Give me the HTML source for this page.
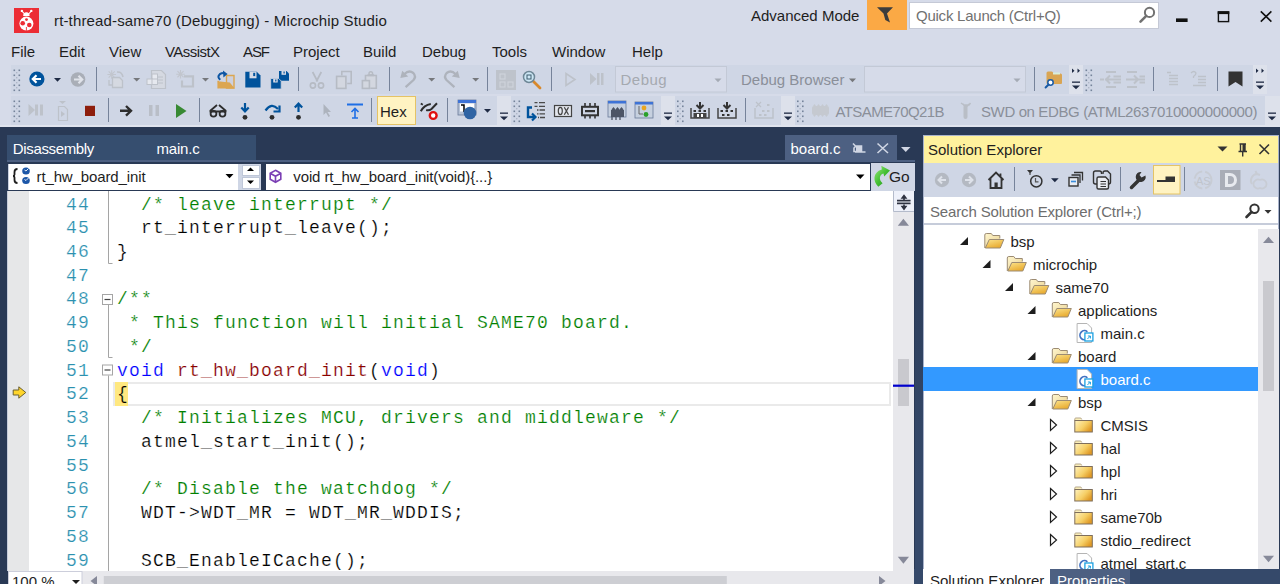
<!DOCTYPE html>
<html><head><meta charset="utf-8">
<style>
*{box-sizing:border-box}
html,body{margin:0;padding:0}
body{width:1280px;height:584px;overflow:hidden;position:relative;background:#D6DBE9;font-family:"Liberation Sans",sans-serif;font-size:15px;color:#1E1E1E}
.a{position:absolute}
.t{position:absolute;white-space:pre;line-height:1}
svg{position:absolute;left:0;top:0;overflow:visible}
.tb{position:absolute;background:#CFD6E5}
.ov{position:absolute;background:#DDE1EB}
.code{position:absolute;font-family:"Liberation Mono",monospace;font-size:18px;letter-spacing:1.2px;white-space:pre;line-height:23.73px;color:#000}
.ln{position:absolute;font-family:"Liberation Mono",monospace;font-size:18px;letter-spacing:1.2px;white-space:pre;line-height:23.73px;color:#2B91AF;text-align:right}
.code,.ln{-webkit-text-stroke:0.2px #fff}.cm{color:#008000}.kw{color:#0000FF}.fn{color:#880000}
</style></head><body>
<!-- ============ TITLE BAR ============ -->
<div class="a" style="left:14px;top:8px;width:25px;height:25px;background:#EC2D35"></div>
<svg width="1280" height="40">
 <path d="M22.2 11.3 L24.6 14 M31 11.3 L28.6 14" stroke="#fff" stroke-width="1.1" stroke-linecap="round"/>
 <circle cx="21.9" cy="10.9" r="1.2" fill="#fff"/><circle cx="31.3" cy="10.9" r="1.2" fill="#fff"/>
 <path fill="#fff" d="M23.2 16 Q23.2 12.3 26.4 12.3 Q29.6 12.3 29.6 16 Z"/>
 <circle cx="26.4" cy="23.6" r="7" fill="#fff"/>
 <circle cx="26.5" cy="19.6" r="1.4" fill="#EC2D35"/>
 <circle cx="22.7" cy="23.3" r="2.3" fill="#EC2D35"/>
 <circle cx="29.3" cy="25" r="2.3" fill="#EC2D35"/>
 <path d="M26.4 27 V30.8" stroke="#EC2D35" stroke-width="0.9"/>
 <!-- funnel -->
 <path fill="#3C3C3C" d="M877 7.3 H893 L887 13.5 L890 22.5 L885.3 20 L883.5 13.5 Z"/>
 <!-- search magnifier -->
 <circle cx="1149.5" cy="12.4" r="4.6" fill="none" stroke="#717171" stroke-width="2"/>
 <path d="M1146.3 15.8 L1140.5 21.6" stroke="#717171" stroke-width="2.6" stroke-linecap="round"/>
 <!-- window buttons -->
 <rect x="1176" y="18.4" width="11.6" height="3.6" fill="#111"/>
 <rect x="1218.4" y="12" width="10.2" height="9.6" fill="none" stroke="#111" stroke-width="1.4"/>
 <rect x="1217.7" y="11.3" width="11.6" height="2.8" fill="#111"/>
 <path d="M1260.8 11.4 L1271.4 21.6 M1271.4 11.4 L1260.8 21.6" stroke="#111" stroke-width="1.6"/>
</svg>
<div class="t" style="left:54px;top:13px;font-size:15px;color:#1E1E1E;letter-spacing:0.15px">rt-thread-same70 (Debugging) - Microchip Studio</div>
<div class="t" style="left:751px;top:8px;font-size:15px;color:#1E1E1E">Advanced Mode</div>
<div class="a" style="left:867px;top:0;width:40px;height:30px;background:#FBA945"></div>
<svg width="1280" height="40">
 <path fill="#3C3C3C" d="M877 7.3 H893 L887 13.5 L890 22.5 L885.3 20 L883.5 13.5 Z"/>
</svg>
<div class="a" style="left:909px;top:1.5px;width:250px;height:27.5px;background:#fff;border:1px solid #C5C9D6"></div>
<div class="t" style="left:916px;top:8px;color:#717171;letter-spacing:-0.24px">Quick Launch (Ctrl+Q)</div>
<svg width="1280" height="40">
 <circle cx="1149.5" cy="12.4" r="4.6" fill="none" stroke="#717171" stroke-width="2"/>
 <path d="M1146.3 15.8 L1140.5 21.6" stroke="#717171" stroke-width="2.6" stroke-linecap="round"/>
</svg>

<!-- ============ MENU ============ -->
<div class="t" style="left:11px;top:43.6px">File</div>
<div class="t" style="left:59px;top:43.6px">Edit</div>
<div class="t" style="left:109px;top:43.6px">View</div>
<div class="t" style="left:165px;top:43.6px;letter-spacing:-0.55px">VAssistX</div>
<div class="t" style="left:243px;top:43.6px;letter-spacing:-1.1px">ASF</div>
<div class="t" style="left:293px;top:43.6px">Project</div>
<div class="t" style="left:363px;top:43.6px">Build</div>
<div class="t" style="left:422px;top:43.6px">Debug</div>
<div class="t" style="left:492px;top:43.6px">Tools</div>
<div class="t" style="left:552px;top:43.6px">Window</div>
<div class="t" style="left:632px;top:43.6px">Help</div>
<!-- ============ TOOLBARS ============ -->
<div class="tb" style="left:11px;top:65px;width:1058px;height:29px"></div>
<div class="ov" style="left:1069px;top:65px;width:14px;height:29px"></div>
<div class="tb" style="left:1083px;top:65px;width:170px;height:29px"></div>
<div class="ov" style="left:1253px;top:65px;width:14px;height:29px"></div>
<div class="tb" style="left:11px;top:96px;width:486px;height:29px"></div>
<div class="ov" style="left:497px;top:96px;width:14px;height:29px"></div>
<div class="tb" style="left:511px;top:96px;width:150px;height:29px"></div>
<div class="ov" style="left:661px;top:96px;width:14px;height:29px"></div>
<div class="tb" style="left:675px;top:96px;width:106px;height:29px"></div>
<div class="ov" style="left:781px;top:96px;width:14px;height:29px"></div>
<div class="tb" style="left:795px;top:96px;width:470px;height:29px"></div>
<div class="ov" style="left:1265px;top:96px;width:15px;height:29px"></div>
<div class="a" style="left:0;top:125px;width:1280px;height:2px;background:#E0E4EE"></div>
<svg width="1280" height="130"><rect x="13.5" y="69.5" width="1.6" height="1.6" fill="#75839A"/><rect x="18.5" y="69.5" width="1.6" height="1.6" fill="#75839A"/><rect x="13.5" y="74.5" width="1.6" height="1.6" fill="#75839A"/><rect x="18.5" y="74.5" width="1.6" height="1.6" fill="#75839A"/><rect x="13.5" y="79.5" width="1.6" height="1.6" fill="#75839A"/><rect x="18.5" y="79.5" width="1.6" height="1.6" fill="#75839A"/><rect x="13.5" y="84.5" width="1.6" height="1.6" fill="#75839A"/><rect x="18.5" y="84.5" width="1.6" height="1.6" fill="#75839A"/><rect x="13.5" y="89.5" width="1.6" height="1.6" fill="#75839A"/><rect x="18.5" y="89.5" width="1.6" height="1.6" fill="#75839A"/><rect x="16.0" y="72.0" width="1.4" height="1.4" fill="#AEB7C7"/><rect x="16.0" y="77.0" width="1.4" height="1.4" fill="#AEB7C7"/><rect x="16.0" y="82.0" width="1.4" height="1.4" fill="#AEB7C7"/><rect x="16.0" y="87.0" width="1.4" height="1.4" fill="#AEB7C7"/><circle cx="36.9" cy="79" r="7.6" fill="#00539C"/><path d="M33 79 h8 M36.5 75.3 L32.8 79 L36.5 82.7" stroke="#fff" stroke-width="2.2" fill="none"/><path d="M54 78 h7 l-3.5 3.8500000000000005 z" fill="#1E2A44"/><circle cx="78" cy="79.5" r="7.3" fill="#A9AEB7"/><path d="M82 79.5 h-8 M78.5 75.8 L82.2 79.5 L78.5 83.2" stroke="#E0E3EA" stroke-width="2.2" fill="none"/><rect x="96" y="67" width="1" height="24" fill="#76839A"/><path d="M107.40 74.50 L116.00 74.50 M108.66 71.46 L114.74 77.54 M111.70 70.20 L111.70 78.80 M114.74 71.46 L108.66 77.54 " stroke="#C2C6CE" stroke-width="1.1"/><path d="M112.5 77.5 h7 l3 3 v7 h-10 z" fill="#D5D9E1" stroke="#BDC2CA" stroke-width="1.3"/><path d="M117 72 q5 -0.5 6 5" stroke="#BDC2CA" stroke-width="1.6" fill="none"/><path d="M109 80 v5 h3" stroke="#BDC2CA" stroke-width="1.3" fill="none"/><path d="M133.2 78 h7 l-3.5 3.6 z" fill="#76787C"/><path d="M151.5 70.5 h10 l4 4 v14 h-14 z" fill="#D5D9E1" stroke="#BDC2CA" stroke-width="1.2"/><path d="M156 77 h7 M156 80 h7 M156 83 h7" stroke="#BDC2CA" stroke-width="1"/><rect x="152" y="74" width="5.5" height="5.5" fill="#E6E9EF" stroke="#BDC2CA" stroke-width="1"/><rect x="147" y="79" width="5.5" height="5.5" fill="#E6E9EF" stroke="#BDC2CA" stroke-width="1"/><rect x="152" y="79" width="5.5" height="5.5" fill="#E6E9EF" stroke="#BDC2CA" stroke-width="1"/><path d="M176.20 74.20 L184.80 74.20 M177.46 71.16 L183.54 77.24 M180.50 69.90 L180.50 78.50 M183.54 71.16 L177.46 77.24 " stroke="#C2C6CE" stroke-width="1.1"/><path d="M184 76.3 h9 v10.2 h-11 v-6" stroke="#BDC2CA" stroke-width="2.2" fill="none"/><path d="M202 78 h7 l-3.5 3.6 z" fill="#76787C"/><path d="M226.5 75.5 h7.5 v12.5 h-7.5 z" fill="#CDD0DE" stroke="#DCA650" stroke-width="1.4"/><path d="M217.8 81.2 L229.8 82.6 L234.6 88.6 L219.2 88.6 Z" fill="#DCA650"/><path d="M218.2 80.8 v7.8" stroke="#DCA650" stroke-width="1.6"/><path d="M220.3 79.8 q-3.5-2.8 -0.5-5.6 q1.8-1.4 5-1.2" stroke="#0E56A3" stroke-width="2.1" fill="none"/><path d="M223 70.6 L227.6 73.9 L223.4 77.6 Z" fill="#0E56A3"/><path d="M245.3 71.8 h11.5 l3.7 3.7 v11.9 h-15.2 z" fill="#00539C"/><rect x="249.5" y="71.8" width="7" height="6.5" fill="#D6DBE6"/><rect x="253.2" y="72.8" width="2" height="3.3" fill="#00539C"/><path d="M279 71 h7.5 l2.5 2.5 v7.3 h-10 z" fill="#00539C"/><rect x="281.5" y="71" width="4.5" height="3.8" fill="#D6DBE6"/><rect x="283.5" y="71.5" width="1.2" height="2" fill="#00539C"/><path d="M270.7 78.5 h8 l2.5 2.5 v8 h-10.5 z" fill="#00539C" stroke="#CFD6E5" stroke-width="0.8"/><rect x="273.2" y="79" width="4.5" height="3.5" fill="#D6DBE6"/><rect x="275.2" y="79.5" width="1.2" height="2" fill="#00539C"/><rect x="298" y="67" width="1" height="24" fill="#76839A"/><path d="M312.6 72 L317.6 81.5 M321.3 72 L316.3 81.5" stroke="#B6BBC4" stroke-width="1.7" fill="none"/><circle cx="312.9" cy="85.5" r="2.6" fill="none" stroke="#B6BBC4" stroke-width="1.6"/><circle cx="321" cy="85.5" r="2.6" fill="none" stroke="#B6BBC4" stroke-width="1.6"/><path d="M341.8 75.5 v-4 h9.4 v12 h-4" fill="none" stroke="#B6BBC4" stroke-width="1.6"/><rect x="336.6" y="76.4" width="9.3" height="12" fill="#D3D7E0" stroke="#B6BBC4" stroke-width="1.6"/><path d="M365.5 80 v-4.5 h10.8 v12.8 h-6" fill="#D3D7E0" stroke="#B6BBC4" stroke-width="1.6"/><circle cx="370.8" cy="73.6" r="1.8" fill="#D3D7E0" stroke="#B6BBC4" stroke-width="1.4"/><rect x="367.5" y="74.2" width="6.6" height="2" fill="#B6BBC4"/><rect x="362.4" y="80.6" width="7" height="7.8" fill="#D3D7E0" stroke="#B6BBC4" stroke-width="1.6"/><rect x="389" y="67" width="1" height="24" fill="#76839A"/><path d="M404.5 74 Q409 69.5 413.3 73 Q416.5 76.5 413.5 80 L405.6 87.2" stroke="#AEB3BC" stroke-width="2.3" fill="none"/><path d="M400.3 78 L402.2 70.8 L408.2 76.6 Z" fill="#AEB3BC"/><path d="M428.2 78 h7 l-3.5 3.6 z" fill="#76787C"/><path d="M455.5 74 Q451 69.5 446.7 73 Q443.5 76.5 446.5 80 L454.4 87.2" stroke="#AEB3BC" stroke-width="2.3" fill="none"/><path d="M459.7 78 L457.8 70.8 L451.8 76.6 Z" fill="#AEB3BC"/><path d="M472.2 78 h7 l-3.5 3.6 z" fill="#76787C"/><rect x="487" y="67" width="1" height="24" fill="#76839A"/><rect x="496" y="70" width="20" height="20" fill="#BEC3CB"/><rect x="500" y="74" width="5" height="5" fill="none" stroke="#CED3DB" stroke-width="1.2"/><rect x="500" y="82" width="5" height="5" fill="none" stroke="#CED3DB" stroke-width="1.2"/><rect x="508" y="82" width="5" height="5" fill="none" stroke="#CED3DB" stroke-width="1.2"/><path d="M532 80 L540 88" stroke="#D8892C" stroke-width="2.8" stroke-linecap="round"/><circle cx="529" cy="77" r="5.5" fill="#CDE7F5" stroke="#6E8796" stroke-width="1.5"/><rect x="527" y="75" width="4" height="4" fill="none" stroke="#3F5D6E" stroke-width="1"/><rect x="551" y="67" width="1" height="24" fill="#76839A"/><path d="M566 73.5 v12 l9-6 z" fill="none" stroke="#BDC2CA" stroke-width="1.6"/><path d="M590 73 v12 l6.5-6 z" fill="#BDC2CA"/><rect x="597" y="73" width="2.5" height="12" fill="#BDC2CA"/><rect x="601" y="73" width="2.5" height="12" fill="#BDC2CA"/><rect x="615.5" y="66.5" width="111" height="25.5" fill="#D6DBE9" stroke="#C3C9D6" stroke-width="1"/><path d="M714.5 78.5 h7 l-3.5 3.8500000000000005 z" fill="#A5ABB5"/><path d="M849 78.5 h7 l-3.5 3.8500000000000005 z" fill="#76787C"/><rect x="864.5" y="66.5" width="161" height="25.5" fill="#D6DBE9" stroke="#C3C9D6" stroke-width="1"/><path d="M1013.5 78.5 h7 l-3.5 3.8500000000000005 z" fill="#A5ABB5"/><rect x="1034" y="67" width="1" height="24" fill="#76839A"/><path d="M1046.5 73 q0-1.5 1.5-1.5 h3.5 q1 0 1.5 1 l0.5 1 h7 q1.5 0 1.5 1.5 v8 q0 1 -1 1 h-13.5 q-1 0 -1-1 z" fill="#D9A553"/><rect x="1053" y="72.5" width="7" height="2" rx="0.5" fill="#D8EEDC"/><circle cx="1050.5" cy="82.5" r="2.7" fill="#fff" stroke="#1A5BA6" stroke-width="1.5"/><path d="M1048.6 84.5 l-3 3" stroke="#1A5BA6" stroke-width="2" stroke-linecap="round"/><rect x="1072" y="81.5" width="8" height="1.3" fill="#1E2A44"/><path d="M1072 85.5 h8 l-4 3.8 z" fill="#1E2A44"/><path d="M1072 68.5 l2.5 2.3 l-2.5 2.3 z M1077.5 68.5 l2.5 2.3 l-2.5 2.3 z" fill="#1E2A44"/><rect x="1085.5" y="69.5" width="1.6" height="1.6" fill="#75839A"/><rect x="1090.5" y="69.5" width="1.6" height="1.6" fill="#75839A"/><rect x="1085.5" y="74.5" width="1.6" height="1.6" fill="#75839A"/><rect x="1090.5" y="74.5" width="1.6" height="1.6" fill="#75839A"/><rect x="1085.5" y="79.5" width="1.6" height="1.6" fill="#75839A"/><rect x="1090.5" y="79.5" width="1.6" height="1.6" fill="#75839A"/><rect x="1085.5" y="84.5" width="1.6" height="1.6" fill="#75839A"/><rect x="1090.5" y="84.5" width="1.6" height="1.6" fill="#75839A"/><rect x="1085.5" y="89.5" width="1.6" height="1.6" fill="#75839A"/><rect x="1090.5" y="89.5" width="1.6" height="1.6" fill="#75839A"/><rect x="1088.0" y="72.0" width="1.4" height="1.4" fill="#AEB7C7"/><rect x="1088.0" y="77.0" width="1.4" height="1.4" fill="#AEB7C7"/><rect x="1088.0" y="82.0" width="1.4" height="1.4" fill="#AEB7C7"/><rect x="1088.0" y="87.0" width="1.4" height="1.4" fill="#AEB7C7"/><path d="M1100 79.5 h4 M1113.5 76.5 h7.5 M1113.5 82.5 h7.5 M1105 79.5 h16 M1110 75.5 l-4 4 l4 4 M1106 72 h10 M1106 87 h10" stroke="#BDC2CA" stroke-width="2" fill="none"/><path d="M1126 79.5 h4 M1139.5 76.5 h5.5 M1139.5 82.5 h5.5 M1126 79.5 h19 M1134 75.5 l4 4 l-4 4 M1127 72 h10 M1127 87 h10" stroke="#BDC2CA" stroke-width="2" fill="none"/><rect x="1153" y="67" width="1" height="24" fill="#76839A"/><path d="M1167 72.5 h4 M1169 75.5 h9 M1169 78.5 h9 M1169 81.5 h9 M1169 84.5 h9" stroke="#BDC2CA" stroke-width="1.3"/><path d="M1191 73 q3-3 5 0 q0 2-2.5 3.5 v1.5 M1195 75.5 h0 M1198 76.5 h8 M1198 79.5 h8 M1198 82.5 h8 M1193 85.5 h13" stroke="#BDC2CA" stroke-width="1.3" fill="none"/><rect x="1217" y="67" width="1" height="24" fill="#76839A"/><path d="M1228.5 71.5 h14 v15 l-7-4.5 l-7 4.5 z" fill="#333"/><rect x="1256" y="81.5" width="8" height="1.3" fill="#1E2A44"/><path d="M1256 85.5 h8 l-4 3.8 z" fill="#1E2A44"/><path d="M1256 68.5 l2.5 2.3 l-2.5 2.3 z M1261.5 68.5 l2.5 2.3 l-2.5 2.3 z" fill="#1E2A44"/><rect x="13.5" y="100.5" width="1.6" height="1.6" fill="#75839A"/><rect x="18.5" y="100.5" width="1.6" height="1.6" fill="#75839A"/><rect x="13.5" y="105.5" width="1.6" height="1.6" fill="#75839A"/><rect x="18.5" y="105.5" width="1.6" height="1.6" fill="#75839A"/><rect x="13.5" y="110.5" width="1.6" height="1.6" fill="#75839A"/><rect x="18.5" y="110.5" width="1.6" height="1.6" fill="#75839A"/><rect x="13.5" y="115.5" width="1.6" height="1.6" fill="#75839A"/><rect x="18.5" y="115.5" width="1.6" height="1.6" fill="#75839A"/><rect x="13.5" y="120.5" width="1.6" height="1.6" fill="#75839A"/><rect x="18.5" y="120.5" width="1.6" height="1.6" fill="#75839A"/><rect x="16.0" y="103.0" width="1.4" height="1.4" fill="#AEB7C7"/><rect x="16.0" y="108.0" width="1.4" height="1.4" fill="#AEB7C7"/><rect x="16.0" y="113.0" width="1.4" height="1.4" fill="#AEB7C7"/><rect x="16.0" y="118.0" width="1.4" height="1.4" fill="#AEB7C7"/><path d="M28.5 104 v12 l6.5-6 z" fill="#BDC2CA"/><rect x="35" y="104.5" width="3" height="11" fill="#BDC2CA"/><rect x="40" y="104.5" width="3" height="11" fill="#BDC2CA"/><path d="M58.5 106.5 h6 l3 3 v11 h-9 z" fill="none" stroke="#BDC2CA" stroke-width="1.2"/><path d="M61 111 v6 l4-3 z" fill="#BDC2CA"/><path d="M59 101 h7 l-3.5 3 z" fill="#BDC2CA"/><rect x="85" y="105.8" width="10" height="10.2" fill="#8E1E0C"/><rect x="108" y="98" width="1" height="24" fill="#76839A"/><path d="M120 110.8 h11 M126 106 l5 4.8 l-5 4.8" stroke="#2D2D2D" stroke-width="2.4" fill="none"/><rect x="149" y="105" width="3.5" height="11" fill="#B9BEC7"/><rect x="155.5" y="105" width="3.5" height="11" fill="#B9BEC7"/><path d="M176 104 v14 l10.5-7 z" fill="#388A34"/><rect x="199" y="98" width="1" height="24" fill="#76839A"/><g stroke="#2D2D2D" stroke-width="1.8" fill="none"><circle cx="213.5" cy="113.8" r="2.9"/><circle cx="222.5" cy="113.8" r="2.9"/><path d="M210 111 l7-6 M226 111 l-7-6 M209.5 111.5 h17"/></g><path d="M245 103 v8 M241.3 107.5 l3.7 3.8 l3.7-3.8" stroke="#00539C" stroke-width="2.2" fill="none"/><circle cx="245" cy="117.3" r="2.4" fill="#2D2D2D"/><path d="M265.5 110.5 q6-8.5 12.5-1.5" stroke="#00539C" stroke-width="2.2" fill="none"/><path d="M279.5 105.5 v6 h-6" stroke="#00539C" stroke-width="2.2" fill="none"/><circle cx="272" cy="117.3" r="2.4" fill="#2D2D2D"/><path d="M298.5 112 v-8 M294.8 107.5 l3.7-3.8 l3.7 3.8" stroke="#00539C" stroke-width="2.2" fill="none"/><circle cx="298.5" cy="117.3" r="2.4" fill="#2D2D2D"/><path d="M323.5 104 v11 l2.5-2.5 l2.5 4.5 l1.5-1 l-2.5-4 h3.5 z" fill="#ADB3BD"/><rect x="347" y="103.5" width="16" height="2" fill="#1F6FE5"/><path d="M355 118 v-8.5 M351.5 112 l3.5-3.5 l3.5 3.5 M352 118 h6" stroke="#1F6FE5" stroke-width="1.6" fill="none"/><rect x="371" y="98" width="1" height="24" fill="#76839A"/><rect x="377.5" y="96.5" width="38" height="28" fill="#FFF3C2" stroke="#E5C365" stroke-width="1"/><path d="M420.8 103.6 l2 1.2" stroke="#2D2D2D" stroke-width="1.8"/><path d="M420.8 111.3 Q424 105 430.8 104" stroke="#2D2D2D" stroke-width="2" fill="none"/><path d="M426.2 110 Q429 111 431.5 109 L437 103.2" stroke="#2D2D2D" stroke-width="2" fill="none"/><circle cx="433.2" cy="115.5" r="3.4" fill="#fff" stroke="#E01010" stroke-width="2.4"/><rect x="447" y="98" width="1" height="24" fill="#76839A"/><rect x="458" y="100" width="18" height="15" fill="#B8C4D8" stroke="#6A7B99" stroke-width="0.8"/><rect x="458" y="100" width="18" height="3" fill="#3E73D6"/><rect x="460" y="103.5" width="14" height="8" fill="#fff"/><path d="M461 105 h3 v7" stroke="#000" stroke-width="1.5" fill="none"/><circle cx="470" cy="113" r="6.3" fill="#2F64A4"/><path d="M484 109 h7 l-3.5 3.8500000000000005 z" fill="#1E2A44"/><rect x="500" y="112.5" width="8" height="1.3" fill="#1E2A44"/><path d="M500 116.5 h8 l-4 3.8 z" fill="#1E2A44"/><rect x="513.5" y="100.5" width="1.6" height="1.6" fill="#75839A"/><rect x="518.5" y="100.5" width="1.6" height="1.6" fill="#75839A"/><rect x="513.5" y="105.5" width="1.6" height="1.6" fill="#75839A"/><rect x="518.5" y="105.5" width="1.6" height="1.6" fill="#75839A"/><rect x="513.5" y="110.5" width="1.6" height="1.6" fill="#75839A"/><rect x="518.5" y="110.5" width="1.6" height="1.6" fill="#75839A"/><rect x="513.5" y="115.5" width="1.6" height="1.6" fill="#75839A"/><rect x="518.5" y="115.5" width="1.6" height="1.6" fill="#75839A"/><rect x="513.5" y="120.5" width="1.6" height="1.6" fill="#75839A"/><rect x="518.5" y="120.5" width="1.6" height="1.6" fill="#75839A"/><rect x="516.0" y="103.0" width="1.4" height="1.4" fill="#AEB7C7"/><rect x="516.0" y="108.0" width="1.4" height="1.4" fill="#AEB7C7"/><rect x="516.0" y="113.0" width="1.4" height="1.4" fill="#AEB7C7"/><rect x="516.0" y="118.0" width="1.4" height="1.4" fill="#AEB7C7"/><path d="M532 107.5 h-4 v9.5 h6" stroke="#00539C" stroke-width="2.4" fill="none"/><path d="M532 113.5 l3.5 3.5 l-3.5 3.5" stroke="#00539C" stroke-width="2.2" fill="none"/><path d="M534.5 102.6 h3 M539 102.6 h6 M534.5 106.3 h3 M539 106.3 h6 M537 110 h1.5 M539.5 110 h5.5 M537 113.8 h1.5 M539.5 113.8 h5.5 M538 117.5 h1 M540 117.5 h5" stroke="#4A4A4A" stroke-width="1.3"/><rect x="554.5" y="105.5" width="17" height="11" fill="#E3E6ED" stroke="#444" stroke-width="1.2"/><ellipse cx="560.3" cy="111" rx="2" ry="3.6" fill="none" stroke="#444" stroke-width="1.2"/><path d="M564.3 107.2 L568.5 114.8 M568.5 107.2 L564.3 114.8" stroke="#444" stroke-width="1.3"/><rect x="582" y="106.8" width="16" height="8.5" fill="none" stroke="#333" stroke-width="2"/><rect x="585" y="110" width="10" height="2.2" fill="#333"/><path d="M585 103 v3 M590 103 v3 M595 103 v3 M585 116 v2.5 M590 116 v2.5 M595 116 v2.5" stroke="#333" stroke-width="1.6"/><rect x="608" y="101" width="18" height="16" fill="#C6D0DF" stroke="#6A7B99" stroke-width="0.8"/><rect x="608" y="101" width="18" height="2.5" fill="#3E73D6"/><rect x="611" y="110" width="13" height="7" fill="#4D5566"/><path d="M612 110 l1.5-2 l1.5 2 M616 110 l1.5-2 l1.5 2 M620 110 l1.5-2 l1.5 2 M612 117 v3 M616 117 v3 M620 117 v3" stroke="#4D5566" stroke-width="1.3" fill="#4D5566"/><rect x="635" y="102" width="18" height="16" fill="#C6D0DF" stroke="#6A7B99" stroke-width="0.8"/><rect x="635" y="102" width="18" height="2.5" fill="#3E73D6"/><path d="M639 106 v8 h4" stroke="#666" stroke-width="1" fill="none"/><circle cx="644" cy="108" r="2.4" fill="#E8A521"/><circle cx="646" cy="114.5" r="2.4" fill="#2AA02A"/><rect x="664" y="112.5" width="8" height="1.3" fill="#1E2A44"/><path d="M664 116.5 h8 l-4 3.8 z" fill="#1E2A44"/><rect x="677" y="100.5" width="1.6" height="1.6" fill="#75839A"/><rect x="682" y="100.5" width="1.6" height="1.6" fill="#75839A"/><rect x="677" y="105.5" width="1.6" height="1.6" fill="#75839A"/><rect x="682" y="105.5" width="1.6" height="1.6" fill="#75839A"/><rect x="677" y="110.5" width="1.6" height="1.6" fill="#75839A"/><rect x="682" y="110.5" width="1.6" height="1.6" fill="#75839A"/><rect x="677" y="115.5" width="1.6" height="1.6" fill="#75839A"/><rect x="682" y="115.5" width="1.6" height="1.6" fill="#75839A"/><rect x="677" y="120.5" width="1.6" height="1.6" fill="#75839A"/><rect x="682" y="120.5" width="1.6" height="1.6" fill="#75839A"/><rect x="679.5" y="103.0" width="1.4" height="1.4" fill="#AEB7C7"/><rect x="679.5" y="108.0" width="1.4" height="1.4" fill="#AEB7C7"/><rect x="679.5" y="113.0" width="1.4" height="1.4" fill="#AEB7C7"/><rect x="679.5" y="118.0" width="1.4" height="1.4" fill="#AEB7C7"/><path d="M700 102 v6 M696.5 105 l3.5 3.5 l3.5 -3.5" stroke="#333" stroke-width="2" fill="none"/><path d="M691 108 v10 h18 v-10" stroke="#444" stroke-width="1.5" fill="none"/><rect x="693.5" y="110" width="2.5" height="2" fill="#333"/><rect x="698.5" y="110" width="2.5" height="2" fill="#333"/><rect x="703.5" y="110" width="2.5" height="2" fill="#333"/><path d="M727 102 v6 M723.5 105 l3.5 3.5 l3.5 -3.5" stroke="#333" stroke-width="2" fill="none"/><path d="M718 108 v10 h18 v-10" stroke="#444" stroke-width="1.5" fill="none"/><rect x="720.5" y="110" width="2.5" height="2" fill="#333"/><rect x="725.5" y="110" width="2.5" height="2" fill="#333"/><rect x="730.5" y="110" width="2.5" height="2" fill="#333"/><rect x="693.5" y="113" width="13" height="5" fill="#444"/><rect x="697" y="114" width="2" height="3" fill="#fff"/><rect x="701" y="114" width="2" height="3" fill="#fff"/><rect x="722" y="114" width="2.5" height="2" fill="#333"/><rect x="727" y="114" width="2.5" height="2" fill="#333"/><rect x="745" y="98" width="1" height="24" fill="#76839A"/><path d="M755 108 v10 h18 v-10" stroke="#BDC2CA" stroke-width="1.5" fill="none"/><path d="M756 102 l5 5 M761 102 l-5 5" stroke="#BDC2CA" stroke-width="1.2"/><rect x="767" y="104" width="2.5" height="2" fill="#BDC2CA"/><rect x="762" y="110" width="2.5" height="2" fill="#BDC2CA"/><rect x="767" y="110" width="2.5" height="2" fill="#BDC2CA"/><rect x="759" y="114" width="2.5" height="2" fill="#BDC2CA"/><rect x="764" y="114" width="2.5" height="2" fill="#BDC2CA"/><rect x="784" y="112.5" width="8" height="1.3" fill="#1E2A44"/><path d="M784 116.5 h8 l-4 3.8 z" fill="#1E2A44"/><rect x="797" y="100.5" width="1.6" height="1.6" fill="#75839A"/><rect x="802" y="100.5" width="1.6" height="1.6" fill="#75839A"/><rect x="797" y="105.5" width="1.6" height="1.6" fill="#75839A"/><rect x="802" y="105.5" width="1.6" height="1.6" fill="#75839A"/><rect x="797" y="110.5" width="1.6" height="1.6" fill="#75839A"/><rect x="802" y="110.5" width="1.6" height="1.6" fill="#75839A"/><rect x="797" y="115.5" width="1.6" height="1.6" fill="#75839A"/><rect x="802" y="115.5" width="1.6" height="1.6" fill="#75839A"/><rect x="797" y="120.5" width="1.6" height="1.6" fill="#75839A"/><rect x="802" y="120.5" width="1.6" height="1.6" fill="#75839A"/><rect x="799.5" y="103.0" width="1.4" height="1.4" fill="#AEB7C7"/><rect x="799.5" y="108.0" width="1.4" height="1.4" fill="#AEB7C7"/><rect x="799.5" y="113.0" width="1.4" height="1.4" fill="#AEB7C7"/><rect x="799.5" y="118.0" width="1.4" height="1.4" fill="#AEB7C7"/><rect x="812" y="106" width="17" height="9" rx="2" fill="#C5C9D0"/><path d="M813 106 l1.5-2 l1.5 2 M817 106 l1.5-2 l1.5 2 M821 106 l1.5-2 l1.5 2 M825 106 l1.5-2 l1.5 2 M813 115 l1.5 2 l1.5-2 M817 115 l1.5 2 l1.5-2 M821 115 l1.5 2 l1.5-2 M825 115 l1.5 2 l1.5-2" fill="#C5C9D0"/><path d="M961 103 l3 2 h5 l1.5-2 M963 104 l1.5 2 h3 l1.5-2" stroke="#B9BEC6" stroke-width="1.5" fill="none"/><rect x="963.5" y="105" width="4" height="14" rx="2" fill="#B9BEC6"/><rect x="1268" y="112.5" width="8" height="1.3" fill="#1E2A44"/><path d="M1268 116.5 h8 l-4 3.8 z" fill="#1E2A44"/></svg>
<div class="t" style="left:620.5px;top:72.3px;color:#A5A9B0;letter-spacing:0.5px">Debug</div>
<div class="t" style="left:741px;top:72.3px;color:#8A8F99">Debug Browser</div>
<div class="t" style="left:380px;top:104px;color:#1E1E1E">Hex</div>
<div class="t" style="left:835.5px;top:104.3px;color:#8A8F99;letter-spacing:-0.6px">ATSAME70Q21B</div>
<div class="t" style="left:981px;top:104.3px;color:#8A8F99;letter-spacing:-0.38px">SWD on EDBG (ATML2637010000000000)</div>
<!-- ============ DOC WELL ============ -->
<div class="a" style="left:0;top:127px;width:1280px;height:457px;background:#293955"></div>
<div class="a" style="left:7px;top:135px;width:249px;height:25px;background:#364E6F"></div>
<div class="a" style="left:785px;top:135px;width:112px;height:25px;background:#4D6082"></div>
<div class="a" style="left:7px;top:159.5px;width:908px;height:2.5px;background:#4D6082"></div>
<div class="t" style="left:12.8px;top:141px;color:#fff;letter-spacing:-0.35px">Disassembly</div>
<div class="t" style="left:156.5px;top:141px;color:#fff;letter-spacing:-0.2px">main.c</div>
<div class="t" style="left:790.5px;top:140.8px;color:#fff">board.c</div>
<div class="a" style="left:7px;top:162px;width:908px;height:29px;background:#293955"></div>
<div class="a" style="left:8px;top:163.5px;width:230px;height:26px;background:#fff;border-left:1px solid #C9D0DF"></div>
<div class="a" style="left:238px;top:163.5px;width:23px;height:26px;background:#CFD6E5"></div>
<div class="a" style="left:241.5px;top:164.5px;width:18px;height:11px;background:#fff;border:1px solid #BFC7D8"></div>
<div class="a" style="left:241.5px;top:177px;width:18px;height:11.5px;background:#fff;border:1px solid #BFC7D8"></div>
<div class="a" style="left:266px;top:163.5px;width:604px;height:26px;background:#fff"></div>
<div class="a" style="left:870.5px;top:162.5px;width:44px;height:28px;background:#CFD6E5"></div>
<svg width="1280" height="200"><path d="M853 143.5 l3 3 M856 146 h5.5 v5.5 h-7.5 v-3.5 z M855 152 h10.5" stroke="#D0D6E4" stroke-width="1.6" fill="none"/><rect x="856" y="146" width="6" height="5" fill="#D0D6E4"/><path d="M877.5 143.5 L888 153 M888 143.5 L877.5 153" stroke="#D0D6E4" stroke-width="1.6"/><path d="M901 147 h9.5 l-4.75 5 z" fill="#D0D6E4"/><path d="M17.5 169 q-3 0 -3 3 v2.5 q0 1.5 -1.5 1.5 q1.5 0 1.5 1.5 v2.5 q0 3 3 3" stroke="#1E1E1E" stroke-width="1.8" fill="none"/><ellipse cx="26" cy="171" rx="3.8" ry="3.5" fill="#1C57A8"/><ellipse cx="26" cy="180.5" rx="3.8" ry="3.5" fill="#1C57A8"/><path d="M24.5 170 l1.5 1 l2.5-2.5 M24.5 179.5 l1.5 1 l2.5-2.5" stroke="#fff" stroke-width="0.9" fill="none"/><path d="M225.5 174 h8 l-4 4.2 z" fill="#000"/><path d="M247 171 h7 l-3.5 -3.5 z" fill="#000"/><path d="M247 180.5 h7 l-3.5 3.5 z" fill="#000"/><path d="M275.5 170.3 l5.3 3 v6 l-5.3 3 l-5.3-3 v-6 z M270.2 173.3 l5.3 3 l5.3-3 M275.5 176.3 v6" stroke="#7B3FB4" stroke-width="1.6" fill="none"/><path d="M856 174.5 h8.5 l-4.25 4.5 z" fill="#000"/><defs><linearGradient id="goG" x1="0" y1="0" x2="1" y2="1"><stop offset="0" stop-color="#9BE87E"/><stop offset="0.5" stop-color="#45C034"/><stop offset="1" stop-color="#1F8A1A"/></linearGradient></defs><path d="M878.3 186.8 C872.8 181.5 872.5 172.5 881.8 169.6 L881.3 165.8 L890 170.6 L884.2 176.6 L883.5 173.4 C879.2 174.6 878.6 179.5 882.6 183.2 Z" fill="url(#goG)"/></svg>
<div class="t" style="left:36.5px;top:169px;color:#1E1E1E;letter-spacing:-0.12px">rt_hw_board_init</div>
<div class="t" style="left:293.3px;top:169px;color:#1E1E1E;letter-spacing:-0.12px">void rt_hw_board_init(void){...}</div>
<div class="t" style="left:889px;top:168.7px;font-size:15.5px;color:#1E1E1E">Go</div>
<!-- ============ EDITOR ============ -->
<div class="a" style="left:8px;top:191px;width:885px;height:380px;background:#fff"></div>
<div class="a" style="left:7px;top:191px;width:1px;height:380px;background:#C5CBD9"></div>
<div class="a" style="left:8px;top:191px;width:21px;height:380px;background:#E6E7E8"></div>
<div class="a" style="left:113px;top:382px;width:778px;height:23.5px;border:2px solid #EAEAEA"></div>
<div class="a" style="left:115px;top:382px;width:12.8px;height:23.8px;background:#FFE880"></div>
<div class="a" style="left:893px;top:191px;width:21px;height:380px;background:#E8E8EC"></div>
<svg width="1280" height="584"><path d="M108.5 191 V263.5 H112.5" stroke="#A5A5A5" stroke-width="1" fill="none"/><rect x="102.5" y="294.5" width="10" height="10" fill="#fff" stroke="#A5A5A5" stroke-width="1"/><path d="M104.5 299.5 h6" stroke="#444" stroke-width="1.2"/><path d="M108.5 305 V357.5 H112.5" stroke="#A5A5A5" stroke-width="1" fill="none"/><rect x="102.5" y="365" width="10" height="10" fill="#fff" stroke="#A5A5A5" stroke-width="1"/><path d="M104.5 370 h6" stroke="#444" stroke-width="1.2"/><path d="M108.5 375.5 V571" stroke="#A5A5A5" stroke-width="1" fill="none"/><path d="M13.2 390 h5.6 v-3.2 l7 5.7 l-7 5.7 v-3.2 h-5.6 z" fill="#FFD52B" stroke="#6B6030" stroke-width="1" stroke-linejoin="round"/><rect x="893.5" y="191" width="20.5" height="20.5" fill="#EEF1FA"/><path d="M893.5 191 V211.5 H914" stroke="#B4BBCB" stroke-width="1" fill="none"/><rect x="897" y="200" width="13.5" height="4" fill="#B8BCC6"/><path d="M897 200.5 h13.5 M897 203.5 h13.5" stroke="#2E3240" stroke-width="1.4"/><path d="M904 197 v3 M904 204.5 v3" stroke="#2E3240" stroke-width="1.6"/><path d="M900.6 198.8 h6.8 l-3.4 -4.6 z M900.6 205.8 h6.8 l-3.4 4.6 z" fill="#2E3240"/><path d="M897.8 225.7 h11.2 l-5.6 -6.9 z" fill="#868999"/><rect x="898" y="359" width="11" height="47" fill="#C9C9CE"/><rect x="893" y="384.6" width="21" height="2.2" fill="#0000CD"/><path d="M897.8 556.7 h11.2 l-5.6 7 z" fill="#868999"/><rect x="8" y="571" width="906" height="13" fill="#E8E8EC"/><rect x="8.5" y="571.5" width="73.5" height="14" fill="#fff" stroke="#CCCEDB" stroke-width="1"/><path d="M72 580 h8 l-4 4 z" fill="#1E1E1E"/><path d="M97 576 v10 l-6.5-5 z" fill="#868999"/><rect x="103.8" y="576" width="623" height="9" fill="#CDCED3"/><path d="M879 576 v10 l6.5-5 z" fill="#868999"/></svg>
<div class="t" style="left:12px;top:574px;color:#1E1E1E;font-size:15px">100 %</div>
<div class="ln" style="left:40px;top:193.5px;width:49.9px">44
45
46
47
48
49
50
51
52
53
54
55
56
57
58
59</div>
<div class="code" style="left:117px;top:193.5px">  <span class="cm">/* leave interrupt */</span>
  rt_interrupt_leave();
}

<span class="cm">/**</span>
<span class="cm"> * This function will initial SAME70 board.</span>
<span class="cm"> */</span>
<span class="kw">void</span> <span class="fn">rt_hw_board_init</span>(<span class="kw">void</span>)
<span style="-webkit-text-stroke-color:#FFE880">{</span>
  <span class="cm">/* Initializes MCU, drivers and middleware */</span>
  atmel_start_init();

  <span class="cm">/* Disable the watchdog */</span>
  WDT-&gt;WDT_MR = WDT_MR_WDDIS;

  SCB_EnableICache();</div>
<!-- ============ SOLUTION EXPLORER ============ -->
<div class="a" style="left:914.5px;top:127px;width:8.5px;height:457px;background:linear-gradient(#293955 0px,#293955 65px,#35496A 350px,#35496A 457px)"></div>
<div class="a" style="left:923px;top:135px;width:356px;height:436px;background:#A9B3CB"></div>
<div class="a" style="left:924px;top:136px;width:354px;height:27px;background:#FFF29D"></div>
<div class="a" style="left:924px;top:163px;width:354px;height:34px;background:#CFD6E5"></div>
<div class="a" style="left:924px;top:197px;width:354px;height:26px;background:#fff"></div>
<div class="a" style="left:924px;top:223px;width:354px;height:1.5px;background:#C6CCDA"></div>
<div class="a" style="left:924px;top:224.5px;width:354px;height:344px;background:#fff"></div>
<div class="a" style="left:923px;top:367px;width:335px;height:24px;background:#3399FF"></div>
<div class="a" style="left:1258px;top:229px;width:20.5px;height:339.5px;background:#E8E8EC"></div>
<div class="a" style="left:914px;top:568.5px;width:366px;height:16px;background:#35496A"></div>
<div class="a" style="left:923px;top:568.5px;width:127px;height:16px;background:#fff"></div>
<div class="a" style="left:1050px;top:568.5px;width:80px;height:16px;background:#4D6082"></div>
<svg width="1280" height="600"><path d="M1217.5 146.5 h10 l-5 5 z" fill="#333"/><path d="M1239.5 144 h6.5 M1240.5 144 v7 M1245 144 v7 M1238.5 151.5 h8.5 M1242.7 151.5 v5" stroke="#333" stroke-width="1.4" fill="none"/><rect x="1242.5" y="144" width="2.5" height="7" fill="#333"/><path d="M1259.5 144.5 L1269 154 M1269 144.5 L1259.5 154" stroke="#333" stroke-width="1.6"/><circle cx="942" cy="180" r="7.2" fill="#B4B9C2"/><path d="M946 180 h-7.5 M942 176.5 l-3.5 3.5 l3.5 3.5" stroke="#DEE2EA" stroke-width="2" fill="none"/><circle cx="969" cy="180" r="7.2" fill="#B4B9C2"/><path d="M965 180 h7.5 M969 176.5 l3.5 3.5 l-3.5 3.5" stroke="#DEE2EA" stroke-width="2" fill="none"/><path d="M988.5 180 l7.5-7.5 l7.5 7.5 M990.5 178.5 v9.5 h11 v-9.5 M1000.5 173.5 v4" stroke="#333" stroke-width="1.8" fill="none"/><rect x="994.5" y="182.5" width="3.2" height="5.5" fill="#333"/><rect x="1014" y="167" width="1" height="24" fill="#76839A"/><path d="M1027 170 h6 l-3 3.5 z" fill="#333"/><path d="M1030 173 v2" stroke="#333" stroke-width="1"/><circle cx="1036.3" cy="181.3" r="5.6" fill="none" stroke="#333" stroke-width="1.5"/><path d="M1035.5 178 v3.8 h3" stroke="#555" stroke-width="1.2" fill="none"/><path d="M1051 178.2 h7.7 l-3.85 4 z" fill="#1E2A44"/><path d="M1074 172.5 h8.5 v8 M1071.5 175 h8.5 v8" stroke="#333" stroke-width="1.3" fill="none"/><rect x="1069" y="177.5" width="9" height="8.5" fill="#E9ECF2" stroke="#333" stroke-width="1.4"/><rect x="1071" y="180.7" width="5" height="1.6" fill="#3B8DDB"/><path d="M1097.5 184 h-2 q-2 0 -2-2 v-9 q0-2 2-2 h4 q2 0 2 2 v1" stroke="#333" stroke-width="1.4" fill="none"/><path d="M1103 174 v-1 q0-2 2-2 h2.5 l3 3 v8 q0 2 -2 2 h-1" stroke="#333" stroke-width="1.4" fill="none"/><path d="M1098.5 177 h7 l3 3 v7.5 q0 1.5 -1.5 1.5 h-8.5 q-1.5 0 -1.5-1.5 v-9 q0-1.5 1.5-1.5 z" fill="#E9ECF2" stroke="#333" stroke-width="1.4"/><path d="M1100.5 181.5 h5.5 M1100.5 184 h5.5 M1100.5 186.5 h5.5" stroke="#333" stroke-width="1"/><rect x="1120" y="167" width="1" height="24" fill="#76839A"/><path d="M1131.5 187.5 l7.5-7.5" stroke="#333" stroke-width="3.5" stroke-linecap="round"/><path d="M1145.5 175.5 a5 5 0 1 1 -4-3.5 l-2 3 l2 2.5 z" fill="#333"/><rect x="1153.5" y="165.5" width="26.5" height="28.5" fill="#FFF3C2" stroke="#E5C365" stroke-width="1"/><rect x="1157" y="180" width="9" height="2" fill="#333"/><rect x="1165.5" y="176.5" width="9.5" height="5.5" fill="#333"/><rect x="1184" y="167" width="1" height="24" fill="#76839A"/><circle cx="1203" cy="180" r="8.5" fill="none" stroke="#C8CCD4" stroke-width="2" stroke-dasharray="11 3"/><text x="1196" y="185" font-family="Liberation Sans" font-size="11" fill="#C0C4CC">AS</text><rect x="1220" y="170" width="20.5" height="20" fill="#A9ADB7"/><path d="M1225 173 h5 a7 7 0 0 1 0 14 h-5 z" fill="#E8EAEF"/><path d="M1228 176 h2 a4 4 0 0 1 0 8 h-2 z" fill="#A9ADB7"/><path d="M1252 184 a6.5 6.5 0 0 1 5-10 l-1.5-3 M1257 174 l3 1" stroke="#C8CCD4" stroke-width="2" fill="none"/><path d="M1260 180 a4.5 4.5 0 1 1 0 8 a4.5 4.5 0 1 1 0-8" stroke="#C8CCD4" stroke-width="1.8" fill="none"/><circle cx="1254.5" cy="208.8" r="4.2" fill="none" stroke="#333" stroke-width="2"/><path d="M1251.5 212 l-5 5" stroke="#333" stroke-width="2.6" stroke-linecap="round"/><path d="M1264.5 210 h7 l-3.5 3.8 z" fill="#333"/><path d="M1263 243 h11 l-5.5-6.2 z" fill="#868999"/><rect x="1263" y="281" width="11" height="110" fill="#C9C9CE"/><path d="M1263 555.8 h11 l-5.5 6.4 z" fill="#868999"/></svg><div class="a" style="left:923px;top:224.5px;width:335px;height:344px;overflow:hidden"><svg width="1280" height="600" style="left:-923px;top:-224.5px"><defs>
<linearGradient id="fb" x1="0" y1="0" x2="1" y2="1"><stop offset="0" stop-color="#FFF6CF"/><stop offset="1" stop-color="#E9D08E"/></linearGradient>
<linearGradient id="ff" x1="0" y1="0" x2="0.6" y2="1"><stop offset="0" stop-color="#FCE58F"/><stop offset="1" stop-color="#E8AA2E"/></linearGradient>
<linearGradient id="fc" x1="0" y1="0" x2="1" y2="0.6"><stop offset="0" stop-color="#FFF3C0"/><stop offset="0.6" stop-color="#F6CF66"/><stop offset="1" stop-color="#E09A26"/></linearGradient>
</defs><path d="M968.0 237.0 v8 h-8 z" fill="#1E1E1E"/><path d="M984.8 248.0 v-13 q0-1.5 1.5-1.5 h5 l1.5 2 h7 v3" fill="url(#fb)" stroke="#9C8B73" stroke-width="1"/><path d="M985.3 248.0 l4-8.5 h14.5 l-3.5 8.5 z" fill="url(#ff)" stroke="#9C8B73" stroke-width="1" stroke-linejoin="round"/><path d="M990.5 260.0 v8 h-8 z" fill="#1E1E1E"/><path d="M1007.3 271.0 v-13 q0-1.5 1.5-1.5 h5 l1.5 2 h7 v3" fill="url(#fb)" stroke="#9C8B73" stroke-width="1"/><path d="M1007.8 271.0 l4-8.5 h14.5 l-3.5 8.5 z" fill="url(#ff)" stroke="#9C8B73" stroke-width="1" stroke-linejoin="round"/><path d="M1013.0 283.0 v8 h-8 z" fill="#1E1E1E"/><path d="M1029.8 294.0 v-13 q0-1.5 1.5-1.5 h5 l1.5 2 h7 v3" fill="url(#fb)" stroke="#9C8B73" stroke-width="1"/><path d="M1030.3 294.0 l4-8.5 h14.5 l-3.5 8.5 z" fill="url(#ff)" stroke="#9C8B73" stroke-width="1" stroke-linejoin="round"/><path d="M1035.5 306.0 v8 h-8 z" fill="#1E1E1E"/><path d="M1052.3 317.0 v-13 q0-1.5 1.5-1.5 h5 l1.5 2 h7 v3" fill="url(#fb)" stroke="#9C8B73" stroke-width="1"/><path d="M1052.8 317.0 l4-8.5 h14.5 l-3.5 8.5 z" fill="url(#ff)" stroke="#9C8B73" stroke-width="1" stroke-linejoin="round"/><path d="M1077.1 323.5 h10 l4.5 4.5 v14.5 h-14.5 z" fill="#fff" stroke="#B5B5B5" stroke-width="1"/><path d="M1087.4 331.80 A4.5 4.5 0 1 0 1087.4 338.60" stroke="#4272C2" stroke-width="1.7" fill="none"/><rect x="1084.9" y="333.00" width="8" height="8" fill="#fff" stroke="#1BA1E2" stroke-width="1.3"/><path d="M1087.4 339.00 l3-3 M1087.9 336.00 h2.5 v2.5" stroke="#1BA1E2" stroke-width="1" fill="none"/><path d="M1035.5 352.0 v8 h-8 z" fill="#1E1E1E"/><path d="M1052.3 363.0 v-13 q0-1.5 1.5-1.5 h5 l1.5 2 h7 v3" fill="url(#fb)" stroke="#9C8B73" stroke-width="1"/><path d="M1052.8 363.0 l4-8.5 h14.5 l-3.5 8.5 z" fill="url(#ff)" stroke="#9C8B73" stroke-width="1" stroke-linejoin="round"/><path d="M1077.1 369.5 h10 l4.5 4.5 v14.5 h-14.5 z" fill="#fff" stroke="#B5B5B5" stroke-width="1"/><path d="M1087.4 377.80 A4.5 4.5 0 1 0 1087.4 384.60" stroke="#4272C2" stroke-width="1.7" fill="none"/><rect x="1084.9" y="379.00" width="8" height="8" fill="#fff" stroke="#1BA1E2" stroke-width="1.3"/><path d="M1087.4 385.00 l3-3 M1087.9 382.00 h2.5 v2.5" stroke="#1BA1E2" stroke-width="1" fill="none"/><path d="M1035.5 398.0 v8 h-8 z" fill="#1E1E1E"/><path d="M1052.3 409.0 v-13 q0-1.5 1.5-1.5 h5 l1.5 2 h7 v3" fill="url(#fb)" stroke="#9C8B73" stroke-width="1"/><path d="M1052.8 409.0 l4-8.5 h14.5 l-3.5 8.5 z" fill="url(#ff)" stroke="#9C8B73" stroke-width="1" stroke-linejoin="round"/><path d="M1050.50 419.50 l6 5.5 l-6 5.5 z" fill="none" stroke="#1E1E1E" stroke-width="1.2"/><path d="M1074.8 420.5 v-1.5 q0-1 1-1 h5 l1 1.5" fill="#FBEFB8" stroke="#B7A98F" stroke-width="1"/><rect x="1074.8" y="420.5" width="17.5" height="11.5" fill="url(#fc)" stroke="#7E6E5C" stroke-width="1"/><path d="M1050.50 442.50 l6 5.5 l-6 5.5 z" fill="none" stroke="#1E1E1E" stroke-width="1.2"/><path d="M1074.8 443.5 v-1.5 q0-1 1-1 h5 l1 1.5" fill="#FBEFB8" stroke="#B7A98F" stroke-width="1"/><rect x="1074.8" y="443.5" width="17.5" height="11.5" fill="url(#fc)" stroke="#7E6E5C" stroke-width="1"/><path d="M1050.50 465.50 l6 5.5 l-6 5.5 z" fill="none" stroke="#1E1E1E" stroke-width="1.2"/><path d="M1074.8 466.5 v-1.5 q0-1 1-1 h5 l1 1.5" fill="#FBEFB8" stroke="#B7A98F" stroke-width="1"/><rect x="1074.8" y="466.5" width="17.5" height="11.5" fill="url(#fc)" stroke="#7E6E5C" stroke-width="1"/><path d="M1050.50 488.50 l6 5.5 l-6 5.5 z" fill="none" stroke="#1E1E1E" stroke-width="1.2"/><path d="M1074.8 489.5 v-1.5 q0-1 1-1 h5 l1 1.5" fill="#FBEFB8" stroke="#B7A98F" stroke-width="1"/><rect x="1074.8" y="489.5" width="17.5" height="11.5" fill="url(#fc)" stroke="#7E6E5C" stroke-width="1"/><path d="M1050.50 511.50 l6 5.5 l-6 5.5 z" fill="none" stroke="#1E1E1E" stroke-width="1.2"/><path d="M1074.8 512.5 v-1.5 q0-1 1-1 h5 l1 1.5" fill="#FBEFB8" stroke="#B7A98F" stroke-width="1"/><rect x="1074.8" y="512.5" width="17.5" height="11.5" fill="url(#fc)" stroke="#7E6E5C" stroke-width="1"/><path d="M1050.50 534.50 l6 5.5 l-6 5.5 z" fill="none" stroke="#1E1E1E" stroke-width="1.2"/><path d="M1074.8 535.5 v-1.5 q0-1 1-1 h5 l1 1.5" fill="#FBEFB8" stroke="#B7A98F" stroke-width="1"/><rect x="1074.8" y="535.5" width="17.5" height="11.5" fill="url(#fc)" stroke="#7E6E5C" stroke-width="1"/><path d="M1077.1 553.5 h10 l4.5 4.5 v14.5 h-14.5 z" fill="#fff" stroke="#B5B5B5" stroke-width="1"/><path d="M1087.4 561.80 A4.5 4.5 0 1 0 1087.4 568.60" stroke="#4272C2" stroke-width="1.7" fill="none"/><rect x="1084.9" y="563.00" width="8" height="8" fill="#fff" stroke="#1BA1E2" stroke-width="1.3"/><path d="M1087.4 569.00 l3-3 M1087.9 566.00 h2.5 v2.5" stroke="#1BA1E2" stroke-width="1" fill="none"/></svg></div>
<div class="a" style="left:923px;top:224.5px;width:335px;height:344px;overflow:hidden"><div class="a" style="left:-923px;top:-224.5px;width:1280px;height:600px"><div class="t" style="left:1010.5px;top:234.10px;color:#1E1E1E">bsp</div><div class="t" style="left:1033.0px;top:257.10px;color:#1E1E1E">microchip</div><div class="t" style="left:1055.5px;top:280.10px;color:#1E1E1E">same70</div><div class="t" style="left:1078.0px;top:303.10px;color:#1E1E1E">applications</div><div class="t" style="left:1100.5px;top:326.10px;color:#1E1E1E">main.c</div><div class="t" style="left:1078.0px;top:349.10px;color:#1E1E1E">board</div><div class="t" style="left:1100.5px;top:372.10px;color:#fff">board.c</div><div class="t" style="left:1078.0px;top:395.10px;color:#1E1E1E">bsp</div><div class="t" style="left:1100.5px;top:418.10px;color:#1E1E1E">CMSIS</div><div class="t" style="left:1100.5px;top:441.10px;color:#1E1E1E">hal</div><div class="t" style="left:1100.5px;top:464.10px;color:#1E1E1E">hpl</div><div class="t" style="left:1100.5px;top:487.10px;color:#1E1E1E">hri</div><div class="t" style="left:1100.5px;top:510.10px;color:#1E1E1E">same70b</div><div class="t" style="left:1100.5px;top:533.10px;color:#1E1E1E">stdio_redirect</div><div class="t" style="left:1100.5px;top:556.10px;color:#1E1E1E">atmel_start.c</div></div></div>
<div class="t" style="left:928px;top:142.3px;color:#1E1E1E">Solution Explorer</div>
<div class="t" style="left:930px;top:204px;color:#6D6D6D;letter-spacing:-0.15px">Search Solution Explorer (Ctrl+;)</div>
<div class="t" style="left:930px;top:573px;color:#1E1E1E">Solution Explorer</div>
<div class="t" style="left:1057px;top:573px;color:#fff">Properties</div>
</body></html>
